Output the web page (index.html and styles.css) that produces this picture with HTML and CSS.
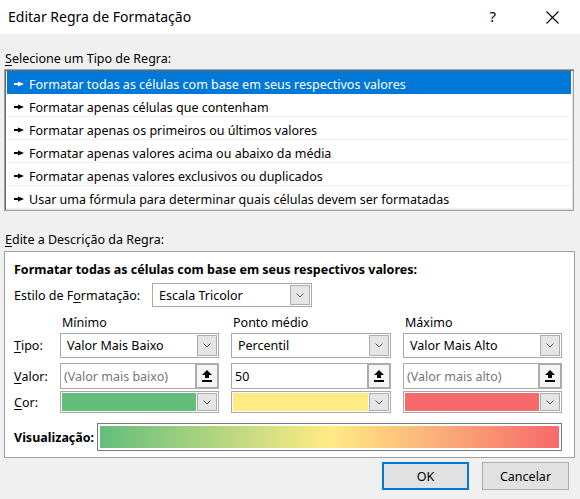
FILE: index.html
```html
<!DOCTYPE html>
<html lang="pt">
<head>
<meta charset="utf-8">
<title>Editar Regra de Formatação</title>
<link rel="stylesheet" href="styles.css">
</head>
<body>
<div class="dialog">
  <div class="titlebar">
    <span class="title">Editar Regra de Formatação</span>
    <span class="help">?</span>
    <svg class="close" width="13" height="13" viewBox="0 0 13 13"><path d="M0.5 0.5 L12.5 12.5 M12.5 0.5 L0.5 12.5" stroke="#000" stroke-width="1.1" fill="none"/></svg>
  </div>
  <div class="body">
    <div class="label"><u>S</u>elecione um Tipo de Regra:</div>
    <div class="listbox">
      <div class="item selected"><svg class="bullet" width="10" height="6" viewBox="0 0 10 6"><rect x="0" y="2" width="5" height="2" fill="currentColor"/><polygon points="4,0.5 10,3 4,5.5" fill="currentColor"/></svg>Formatar todas as células com base em seus respectivos valores</div>
      <div class="item"><svg class="bullet" width="10" height="6" viewBox="0 0 10 6"><rect x="0" y="2" width="5" height="2" fill="currentColor"/><polygon points="4,0.5 10,3 4,5.5" fill="currentColor"/></svg>Formatar apenas células que contenham</div>
      <div class="item"><svg class="bullet" width="10" height="6" viewBox="0 0 10 6"><rect x="0" y="2" width="5" height="2" fill="currentColor"/><polygon points="4,0.5 10,3 4,5.5" fill="currentColor"/></svg>Formatar apenas os primeiros ou últimos valores</div>
      <div class="item"><svg class="bullet" width="10" height="6" viewBox="0 0 10 6"><rect x="0" y="2" width="5" height="2" fill="currentColor"/><polygon points="4,0.5 10,3 4,5.5" fill="currentColor"/></svg>Formatar apenas valores acima ou abaixo da média</div>
      <div class="item"><svg class="bullet" width="10" height="6" viewBox="0 0 10 6"><rect x="0" y="2" width="5" height="2" fill="currentColor"/><polygon points="4,0.5 10,3 4,5.5" fill="currentColor"/></svg>Formatar apenas valores exclusivos ou duplicados</div>
      <div class="item"><svg class="bullet" width="10" height="6" viewBox="0 0 10 6"><rect x="0" y="2" width="5" height="2" fill="currentColor"/><polygon points="4,0.5 10,3 4,5.5" fill="currentColor"/></svg>Usar uma fórmula para determinar quais células devem ser formatadas</div>
    </div>
    <div class="label label-desc"><u>E</u>dite a Descrição da Regra:</div>
    <div class="desc">
      <div class="desc-title">Formatar todas as células com base em seus respectivos valores:</div>
      <div class="style-row">
        <span class="style-label">Estilo de F<u>o</u>rmatação:</span>
        <div class="combo style-combo"><span class="combo-text">Escala Tricolor</span><span class="dd-btn"><svg width="8" height="5" viewBox="0 0 8 5"><path d="M0.5 0.5 L4 4 L7.5 0.5" stroke="#5a5a5a" fill="none"/></svg></span></div>
      </div>
      <div class="grid">
        <span></span>
        <span class="head">Mínimo</span>
        <span class="head">Ponto médio</span>
        <span class="head">Máximo</span>

        <span class="rowlabel"><u>T</u>ipo:</span>
        <div class="combo"><span class="combo-text">Valor Mais Baixo</span><span class="dd-btn"><svg width="8" height="5" viewBox="0 0 8 5"><path d="M0.5 0.5 L4 4 L7.5 0.5" stroke="#5a5a5a" fill="none"/></svg></span></div>
        <div class="combo"><span class="combo-text">Percentil</span><span class="dd-btn"><svg width="8" height="5" viewBox="0 0 8 5"><path d="M0.5 0.5 L4 4 L7.5 0.5" stroke="#5a5a5a" fill="none"/></svg></span></div>
        <div class="combo"><span class="combo-text">Valor Mais Alto</span><span class="dd-btn"><svg width="8" height="5" viewBox="0 0 8 5"><path d="M0.5 0.5 L4 4 L7.5 0.5" stroke="#5a5a5a" fill="none"/></svg></span></div>

        <span class="rowlabel"><u>V</u>alor:</span>
        <div class="valfield"><span class="val-text placeholder">(Valor mais baixo)</span><span class="ref-btn"><svg width="10" height="12" viewBox="0 0 10 12"><polygon points="5,0 10,5 7,5 7,8 3,8 3,5 0,5" fill="#000"/><rect x="0" y="10" width="10" height="2" fill="#000"/></svg></span></div>
        <div class="valfield"><span class="val-text">50</span><span class="ref-btn"><svg width="10" height="12" viewBox="0 0 10 12"><polygon points="5,0 10,5 7,5 7,8 3,8 3,5 0,5" fill="#000"/><rect x="0" y="10" width="10" height="2" fill="#000"/></svg></span></div>
        <div class="valfield"><span class="val-text placeholder">(Valor mais alto)</span><span class="ref-btn"><svg width="10" height="12" viewBox="0 0 10 12"><polygon points="5,0 10,5 7,5 7,8 3,8 3,5 0,5" fill="#000"/><rect x="0" y="10" width="10" height="2" fill="#000"/></svg></span></div>

        <span class="rowlabel"><u>C</u>or:</span>
        <div class="colorcombo"><span class="swatch green"></span><span class="dd-btn"><svg width="8" height="5" viewBox="0 0 8 5"><path d="M0.5 0.5 L4 4 L7.5 0.5" stroke="#5a5a5a" fill="none"/></svg></span></div>
        <div class="colorcombo"><span class="swatch yellow"></span><span class="dd-btn"><svg width="8" height="5" viewBox="0 0 8 5"><path d="M0.5 0.5 L4 4 L7.5 0.5" stroke="#5a5a5a" fill="none"/></svg></span></div>
        <div class="colorcombo"><span class="swatch red"></span><span class="dd-btn"><svg width="8" height="5" viewBox="0 0 8 5"><path d="M0.5 0.5 L4 4 L7.5 0.5" stroke="#5a5a5a" fill="none"/></svg></span></div>
      </div>
      <div class="preview-row">
        <span class="preview-label">Visualização:</span>
        <div class="preview"><div class="gradient"></div></div>
      </div>
    </div>
    <div class="buttons">
      <button class="btn btn-default">OK</button>
      <button class="btn">Cancelar</button>
    </div>
  </div>
</div>
</body>
</html>
```

FILE: styles.css
```css
* { box-sizing: border-box; }
html, body { margin: 0; padding: 0; }
body {
  width: 580px;
  height: 499px;
  overflow: hidden;
  background: #f0f0f0;
  font-family: "Noto Sans", "Open Sans", sans-serif;
  font-size: 12.5px;
  color: #000;
}
u { text-decoration: underline; text-underline-offset: 2px; }

.titlebar {
  height: 34px;
  background: #fff;
  display: flex;
  align-items: center;
  padding-left: 8px;
}
.title { font-size: 14px; flex: 1; padding-bottom: 2px; }
.help { font-size: 15px; margin-right: 50px; padding-bottom: 2px; }
.close { margin-right: 21px; }

.body { padding: 0 5px 0 4px; }
.label { height: 16px; line-height: 16px; margin-top: 17px; padding-left: 1px; }
.label-desc { margin-top: 21px; }

.listbox {
  margin-top: 2px;
  width: 570px;
  height: 142px;
  background: #fff;
  border: 1px solid #a0a0a0;
  box-shadow: inset 1px 1px 0 #696969, inset -1px -1px 0 #e3e3e3;
  padding: 1px 2px 1px 2px;
}
.item {
  height: 23px;
  display: flex;
  align-items: center;
  padding-left: 7px;
  padding-top: 4px;
  border-bottom: 1px solid #f0f0f0;
  white-space: nowrap;
  color: #000;
}
.item .bullet { margin-right: 5px; flex: none; color: #000; margin-bottom: 1px; }
.item.selected { background: #0078d7; color: #fff; border-bottom-color: #0078d7; }
.item.selected .bullet { color: #fff; }

.desc {
  margin-top: 3px;
  width: 571px;
  height: 207px;
  background: #fff;
  border: 1px solid #a0a0a0;
  padding: 10px 0 6px 9px;
}
.desc-title { font-weight: bold; height: 16px; line-height: 16px; }
.style-row { display: flex; align-items: center; margin-top: 5px; height: 24px; }
.style-label { width: 138px; }

.combo {
  display: flex;
  align-items: center;
  height: 25px;
  border: 1px solid #a9a9a9;
  background: #fff;
  padding: 1px;
}
.style-combo { width: 160px; height: 24px; }
.combo-text { flex: 1; padding-left: 5px; white-space: nowrap; overflow: hidden; }
.dd-btn {
  width: 20px;
  height: 100%;
  background: #e5e5e5;
  border: 1px solid #adadad;
  display: flex;
  align-items: center;
  justify-content: center;
  flex: none;
}

.grid {
  display: grid;
  grid-template-columns: 34px 159px 160px 159px;
  grid-template-rows: 16px 27px 31px 24px;
  column-gap: 12px;
  margin-top: 8px;
}
.head { line-height: 16px; padding-left: 2px; }
.grid > :nth-child(n+5):nth-child(-n+8) { margin-top: 2px; }
.grid > :nth-child(n+9):nth-child(-n+12) { margin-top: 5px; }
.grid > :nth-child(n+13) { margin-top: 2px; }
.rowlabel { display: flex; align-items: center; }

.valfield { display: flex; height: 26px; }
.val-text {
  flex: 1;
  border: 1px solid #a9a9a9;
  border-right: none;
  background: #fff;
  display: flex;
  align-items: center;
  padding-left: 3px;
  white-space: nowrap;
  overflow: hidden;
}
.placeholder { color: #767676; }
.ref-btn {
  width: 24px;
  border: 2px solid #acacac;
  background: #f4f4f4;
  display: flex;
  align-items: center;
  justify-content: center;
  flex: none;
}

.colorcombo {
  display: flex;
  height: 22px;
  border: 1px solid #a9a9a9;
  background: #fff;
  padding: 1px;
  gap: 1px;
}
.swatch { flex: 1; }
.green { background: #63be7b; }
.yellow { background: #ffeb84; }
.red { background: #f8696b; }

.preview-row { display: flex; align-items: center; margin-top: 10px; height: 28px; }
.preview-label { font-weight: bold; width: 83px; }
.preview {
  width: 465px;
  height: 28px;
  border: 1px solid #7a7a7a;
  padding: 2px;
  background: #fff;
}
.gradient {
  width: 100%;
  height: 100%;
  background: linear-gradient(to right, #63be7b 0%, #ffeb84 50%, #f8696b 100%);
}

.buttons { display: flex; justify-content: flex-end; gap: 13px; margin-top: 4px; padding-right: 6px; }
.btn {
  font-family: "Noto Sans", "Open Sans", sans-serif;
  font-size: 12.5px;
  color: #000;
  width: 87px;
  height: 28px;
  background: #e1e1e1;
  border: 1px solid #adadad;
  padding: 0;
}
.btn-default { border: 2px solid #0078d7; }
```
